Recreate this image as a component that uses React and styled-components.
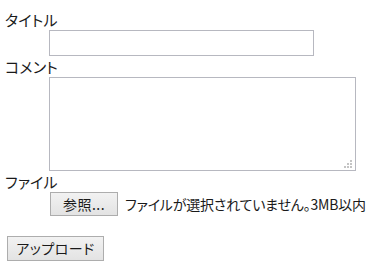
import React from 'react';
import styled, { createGlobalStyle } from 'styled-components';

const Global = createGlobalStyle`
  html, body {
    margin: 0;
    padding: 0;
    background: #ffffff;
  }
  body {
    font-family: "Noto Sans CJK JP", "Noto Sans", sans-serif;
    color: #1a1a1a;
  }
`;

const Form = styled.form`
  display: flex;
  flex-direction: column;
  align-items: flex-start;
  padding: 10px 0 0 5px;
`;

const Label = styled.div`
  height: ${props => props.h || '21px'};
  line-height: ${props => props.h || '21px'};
  font-size: 15px;
  font-feature-settings: "palt";
  letter-spacing: 0.2px;
`;

const Field = styled.div`
  margin-left: 44px;
  display: flex;
  align-items: center;
`;

const TextInput = styled.input`
  box-sizing: border-box;
  width: 265px;
  height: 26px;
  margin: 0;
  border: 1px solid #b7b8c0;
  background: #fff;
  outline: none;
`;

const AreaWrap = styled.div`
  position: relative;
  width: 307px;
  height: 94px;
`;

const TextArea = styled.textarea`
  box-sizing: border-box;
  width: 100%;
  height: 100%;
  margin: 0;
  border: 1px solid #b7b8c0;
  resize: none;
  outline: none;
  display: block;
`;

const Grip = styled.svg`
  position: absolute;
  right: 4px;
  bottom: 3px;
`;

const Button = styled.button`
  box-sizing: border-box;
  width: ${props => props.w};
  height: ${props => props.h};
  margin: 0 0 0 ${props => props.ml || '0'};
  padding: 0;
  border: 1px solid #adadad;
  background: linear-gradient(#f2f2f2, #e3e3e3);
  font-family: "Noto Sans CJK JP", sans-serif;
  font-size: 14px;
  font-feature-settings: "palt";
  color: #1a1a1a;
  letter-spacing: 0.5px;
`;

const Status = styled.span`
  margin-left: 7px;
  font-size: 14px;
  font-feature-settings: "palt";
  letter-spacing: -0.2px;
  white-space: nowrap;
`;

const Submit = styled.div`
  margin-top: 19px;
  margin-left: 2px;
`;

const dots = [[6, 0], [3, 3], [6, 3], [0, 6], [3, 6], [6, 6]];

function App() {
  return (
    <>
      <Global />
      <Form onSubmit={e => e.preventDefault()}>
        <Label h="20px">タイトル</Label>
        <Field>
          <TextInput type="text" />
        </Field>
        <Label>コメント</Label>
        <Field>
          <AreaWrap>
            <TextArea />
            <Grip width="8" height="8" viewBox="0 0 8 8">
              {dots.map(([x, y]) => (
                <rect key={x + '-' + y} x={x} y={y} width="2" height="2" fill="#c4c4c4" />
              ))}
            </Grip>
          </AreaWrap>
        </Field>
        <Label>ファイル</Label>
        <Field>
          <Button type="button" w="68px" h="24px" ml="1px">参照...</Button>
          <Status>ファイルが選択されていません。3MB以内</Status>
        </Field>
        <Submit>
          <Button type="submit" w="97px" h="25px">アップロード</Button>
        </Submit>
      </Form>
    </>
  );
}

export default App;
